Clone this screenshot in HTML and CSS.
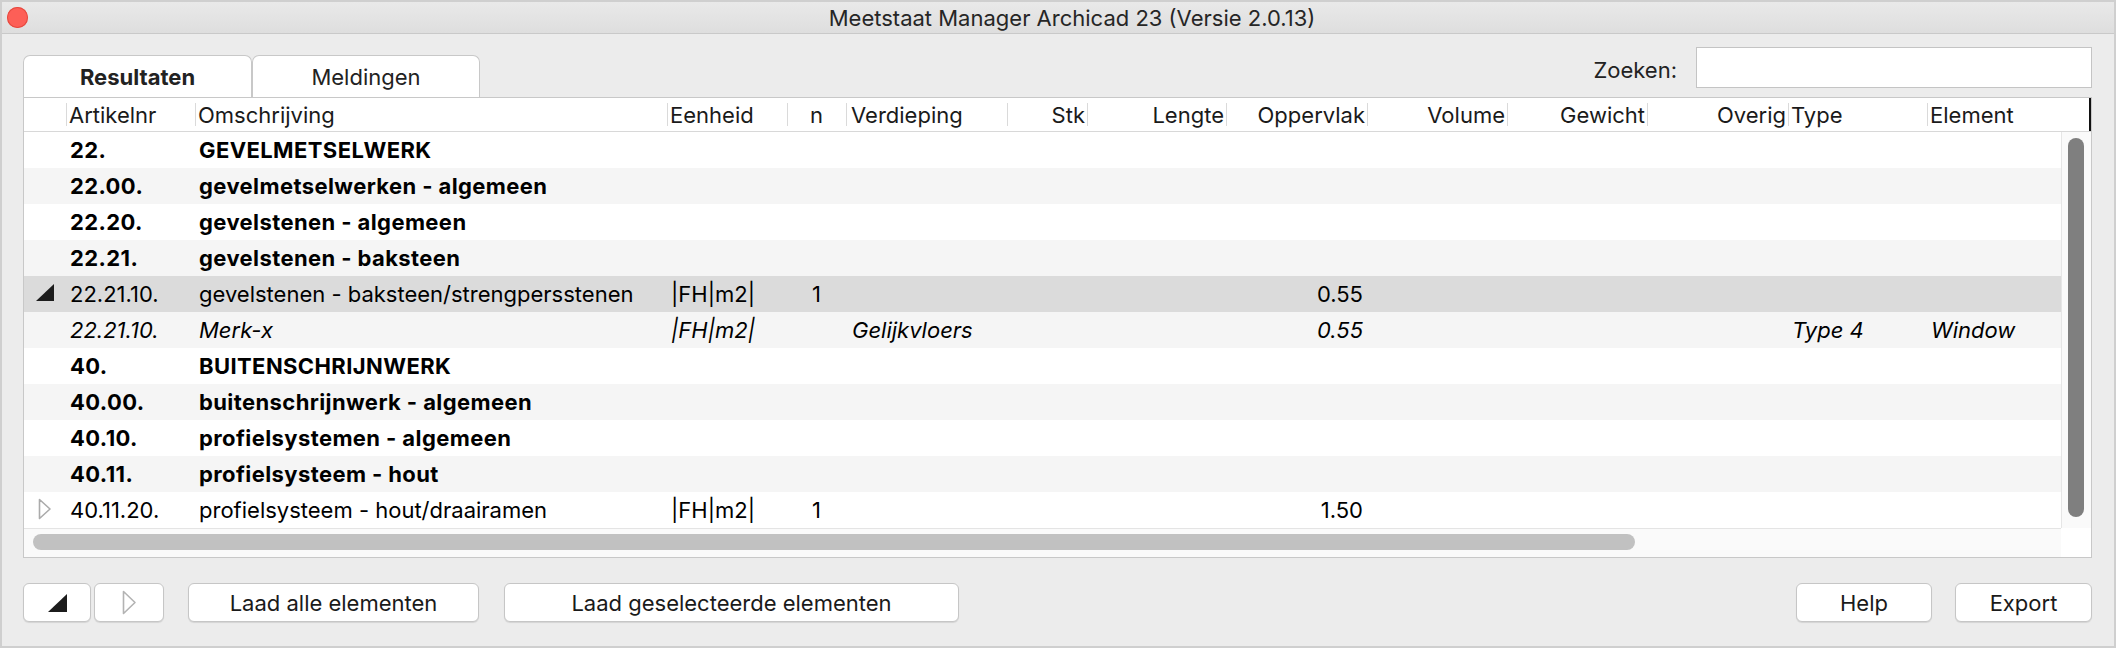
FILE: index.html
```html
<!DOCTYPE html>
<html lang="nl">
<head>
<meta charset="utf-8">
<title>Meetstaat Manager Archicad 23</title>
<link rel="stylesheet" href="styles.css">
</head>
<body>
<div class="window">
  <div class="titlebar">
    <div class="tb-left"><span class="close"></span></div>
    <div class="title">Meetstaat Manager Archicad 23 (Versie 2.0.13)</div>
    <div class="tb-right"></div>
  </div>
  <div class="content">
    <div class="topbar">
      <div class="tabs">
        <div class="tab active">Resultaten</div>
        <div class="tab">Meldingen</div>
      </div>
      <div class="search">
        <span class="search-label">Zoeken:</span>
        <div class="searchbox"></div>
      </div>
    </div>

    <div class="table">
      <div class="thead">
        <div class="th first"></div>
        <div class="th">Artikelnr</div>
        <div class="th">Omschrijving</div>
        <div class="th">Eenheid</div>
        <div class="th c">n</div>
        <div class="th wide-pad">Verdieping</div>
        <div class="th r">Stk</div>
        <div class="th r">Lengte</div>
        <div class="th r">Oppervlak</div>
        <div class="th r">Volume</div>
        <div class="th r">Gewicht</div>
        <div class="th r">Overig</div>
        <div class="th">Type</div>
        <div class="th">Element</div>
        <div class="th-edge"></div>
      </div>

      <div class="body">
        <div class="rows">
          <div class="row bold"><div class="td"></div><div class="td">22.</div><div class="td">GEVELMETSELWERK</div></div>
          <div class="row bold alt"><div class="td"></div><div class="td">22.00.</div><div class="td">gevelmetselwerken - algemeen</div></div>
          <div class="row bold"><div class="td"></div><div class="td">22.20.</div><div class="td">gevelstenen - algemeen</div></div>
          <div class="row bold alt"><div class="td"></div><div class="td">22.21.</div><div class="td">gevelstenen - baksteen</div></div>
          <div class="row selected">
            <div class="td icon"><svg width="18" height="17" viewBox="0 0 18 17"><polygon points="0,17 18,17 18,0" fill="#1c1c1c"/></svg></div>
            <div class="td">22.21.10.</div>
            <div class="td">gevelstenen - baksteen/strengpersstenen</div>
            <div class="td">|FH|m2|</div>
            <div class="td c">1</div>
            <div class="td col-opp r">0.55</div>
          </div>
          <div class="row italic alt">
            <div class="td"></div>
            <div class="td">22.21.10.</div>
            <div class="td">Merk-x</div>
            <div class="td">|FH|m2|</div>
            <div class="td"></div>
            <div class="td wide-pad">Gelijkvloers</div>
            <div class="td col-opp r">0.55</div>
            <div class="td col-type">Type 4</div>
            <div class="td col-elem">Window</div>
          </div>
          <div class="row bold"><div class="td"></div><div class="td">40.</div><div class="td">BUITENSCHRIJNWERK</div></div>
          <div class="row bold alt"><div class="td"></div><div class="td">40.00.</div><div class="td">buitenschrijnwerk - algemeen</div></div>
          <div class="row bold"><div class="td"></div><div class="td">40.10.</div><div class="td">profielsystemen - algemeen</div></div>
          <div class="row bold alt"><div class="td"></div><div class="td">40.11.</div><div class="td">profielsysteem - hout</div></div>
          <div class="row">
            <div class="td icon"><svg width="14" height="22" viewBox="0 0 14 22"><polygon points="1.5,1.5 12,11 1.5,20.5" fill="none" stroke="#ababab" stroke-width="1.6" stroke-linejoin="round"/></svg></div>
            <div class="td">40.11.20.</div>
            <div class="td">profielsysteem - hout/draairamen</div>
            <div class="td">|FH|m2|</div>
            <div class="td c">1</div>
            <div class="td col-opp r">1.50</div>
          </div>
        </div>
        <div class="vscroll"><div class="vthumb"></div></div>
      </div>

      <div class="hbar">
        <div class="hscroll"><div class="hthumb"></div></div>
        <div class="corner"></div>
      </div>
    </div>

    <div class="footer">
      <button class="btn btn-icon1"><svg width="19" height="18" viewBox="0 0 19 18"><polygon points="0,18 19,18 19,0" fill="#1c1c1c"/></svg></button>
      <button class="btn btn-icon2"><svg width="15" height="25" viewBox="0 0 15 25"><polygon points="1.5,1.5 13,12.5 1.5,23.5" fill="none" stroke="#b3b3b3" stroke-width="1.6" stroke-linejoin="round"/></svg></button>
      <button class="btn btn-all">Laad alle elementen</button>
      <button class="btn btn-sel">Laad geselecteerde elementen</button>
      <div class="spacer"></div>
      <button class="btn btn-help">Help</button>
      <button class="btn btn-export">Export</button>
    </div>
  </div>
</div>
</body>
</html>
```

FILE: styles.css
```css
html, body {
  margin: 0;
  padding: 0;
  background: #ececec;
}

.window {
  width: 2116px;
  height: 648px;
  box-sizing: border-box;
  border: 2px solid #cfcfcf;
  background: #ececec;
  display: flex;
  flex-direction: column;
  font-family: Inter, "Liberation Sans", Arial, sans-serif;
  font-size: 22px;
  color: #000;
}

/* Title bar */
.titlebar {
  height: 31px;
  flex: none;
  border-bottom: 1px solid #c9c9c9;
  background: linear-gradient(#e9e9e9, #dedede);
  display: grid;
  grid-template-columns: 1fr auto 1fr;
  align-items: center;
}
.tb-left {
  display: flex;
  align-items: center;
}
.close {
  width: 21px;
  height: 21px;
  margin-left: 5px;
  border-radius: 50%;
  background: #fd5f57;
  box-shadow: inset 0 0 0 1px #e5493f;
}
.title {
  font-size: 22px;
  color: #262626;
  white-space: nowrap;
  margin-left: 28px;
}

/* Content */
.content {
  flex: 1;
  display: flex;
  flex-direction: column;
  padding: 13px 22px 24px 21px;
}

.topbar {
  height: 50px;
  flex: none;
  display: flex;
  align-items: flex-end;
}
.tabs {
  display: flex;
}
.tab {
  height: 42px;
  box-sizing: border-box;
  border: 1px solid #c8c8c8;
  border-bottom: none;
  border-radius: 7px 7px 0 0;
  background: #fff;
  display: flex;
  align-items: center;
  justify-content: center;
  color: #222;
  width: 228px;
}
.tab.active {
  width: 229px;
  font-weight: 700;
}
.search {
  margin-left: auto;
  align-self: flex-start;
  display: flex;
  align-items: center;
  gap: 19px;
}
.search-label {
  color: #222;
  padding-top: 4px;
}
.searchbox {
  width: 396px;
  height: 41px;
  box-sizing: border-box;
  border: 1px solid #c4c4c4;
  background: #fff;
}

/* Table */
.table {
  flex: none;
  border: 1px solid #c8c8c8;
  background: #fff;
  display: flex;
  flex-direction: column;
}
.thead {
  height: 33px;
  border-bottom: 1px solid #d8d8d8;
  display: grid;
  grid-template-columns: 42px 129px 472px 120px 59px 161px 80px 139px 141px 140px 140px 141px 139px 162px 2px;
}
.th {
  display: flex;
  align-items: center;
  padding: 0 3px 0 3px;
  white-space: nowrap;
  overflow: hidden;
  color: #1a1a1a;
  background: linear-gradient(#dadada, #dadada) no-repeat left center / 1px 23px;
}
.th.first {
  background: none;
}
.th.r {
  justify-content: flex-end;
  padding: 0 2px 0 0;
}
.th.c {
  justify-content: center;
  padding: 0;
}
.th.wide-pad {
  padding-left: 5px;
}
.th-edge {
  background: #111;
}

.body {
  display: flex;
  height: 396px;
}
.rows {
  width: 2037px;
  flex: none;
}
.row {
  height: 36px;
  display: grid;
  grid-template-columns: 42px 129px 472px 120px 59px 161px 80px 139px 141px 140px 140px 141px 139px 1fr;
  background: #fff;
}
.row.alt {
  background: #f5f5f5;
}
.row.selected {
  background: #dbdbdb;
}
.row.bold {
  font-weight: 700;
  letter-spacing: 0.4px;
}
.row.italic {
  font-style: italic;
}
.td {
  display: flex;
  align-items: center;
  padding: 0 4px;
  white-space: nowrap;
  overflow: hidden;
}
.td.r {
  justify-content: flex-end;
}
.td.c {
  justify-content: center;
  padding: 0;
}
.td.wide-pad {
  padding-left: 6px;
}
.td.icon {
  justify-content: center;
  padding: 0 0 3px 0;
}
.col-opp {
  grid-column: 9;
}
.col-type {
  grid-column: 13;
}
.col-elem {
  grid-column: 14;
}

.vscroll {
  flex: 1;
  box-sizing: border-box;
  border-left: 1px solid #e6e6e6;
  background: #fafafa;
  padding: 6px 0 11px 6px;
}
.vthumb {
  width: 16px;
  height: 100%;
  border-radius: 8px;
  background: #7f7f7f;
}

.hbar {
  height: 29px;
  display: flex;
}
.hscroll {
  width: 2037px;
  flex: none;
  box-sizing: border-box;
  border-top: 1px solid #e4e4e4;
  background: #fafafa;
  padding: 5px 0 0 9px;
}
.hthumb {
  width: 1602px;
  height: 16px;
  border-radius: 8px;
  background: #c1c1c1;
}
.corner {
  flex: 1;
  background: #fff;
}

/* Footer buttons */
.footer {
  margin-top: 25px;
  height: 39px;
  display: flex;
}
.btn {
  height: 39px;
  box-sizing: border-box;
  border: 1px solid #c6c6c6;
  border-radius: 6px;
  background: #fff;
  box-shadow: 0 1px 1px rgba(0, 0, 0, 0.10);
  font-family: inherit;
  font-size: 22px;
  color: #1a1a1a;
  padding: 0;
  display: flex;
  align-items: center;
  justify-content: center;
}
.btn-icon1 {
  width: 68px;
}
.btn-icon2 {
  width: 70px;
  margin-left: 3px;
}
.btn-all {
  width: 291px;
  margin-left: 24px;
}
.btn-sel {
  width: 455px;
  margin-left: 25px;
}
.spacer {
  flex: 1;
}
.btn-help {
  width: 136px;
}
.btn-export {
  width: 137px;
  margin-left: 23px;
}
```
